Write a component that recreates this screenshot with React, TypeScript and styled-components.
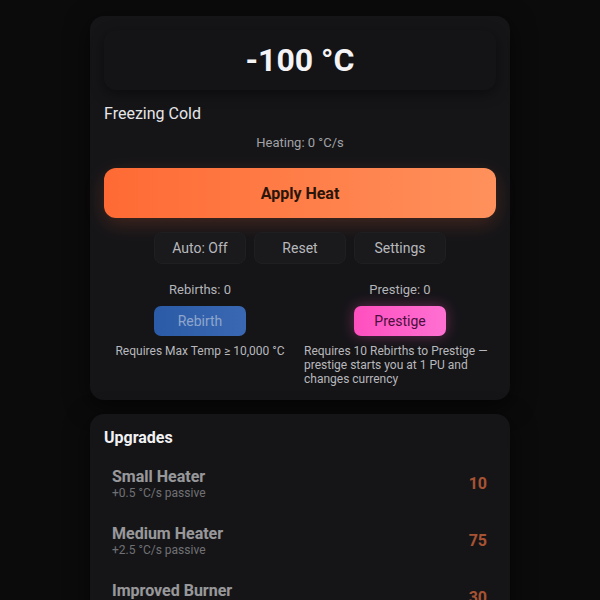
import React from 'react'
import styled, { createGlobalStyle } from 'styled-components'

const GlobalStyle = createGlobalStyle`
  html, body {
    margin: 0;
    background: #0b0b0c;
    color: #e8e8ea;
    font-family: Roboto, 'Noto Sans', Arial, sans-serif;
  }
`

const Page = styled.div`
  width: 420px;
  margin: 0 auto;
  padding: 16px 0;
  display: flex;
  flex-direction: column;
  gap: 14px;
`

const Card = styled.div`
  background: #151518;
  border-radius: 14px;
  padding: 14px;
  box-shadow: 0 6px 24px rgba(0, 0, 0, 0.6);
  display: flex;
  flex-direction: column;
`

const TempBox = styled.div`
  height: 60px;
  border-radius: 12px;
  background: #141416;
  box-shadow: 0 4px 14px rgba(0, 0, 0, 0.45);
  display: flex;
  align-items: center;
  justify-content: center;
  font-size: 32px;
  font-weight: 700;
  color: #f4f4f6;
`

const Status = styled.div`
  margin-top: 14px;
  font-size: 16px;
  color: #e6e6e8;
`

const Rate = styled.div`
  margin-top: 12px;
  text-align: center;
  font-size: 13px;
  color: #a2a2a6;
`

const HeatButton = styled.button`
  margin-top: 18px;
  height: 50px;
  border: none;
  border-radius: 12px;
  background: linear-gradient(90deg, #ff6a34, #ff915c);
  box-shadow: 0 6px 20px rgba(255, 110, 60, 0.2);
  color: #2a150b;
  font-family: inherit;
  font-size: 16px;
  font-weight: 700;
`

const Controls = styled.div`
  margin-top: 14px;
  display: flex;
  justify-content: center;
  gap: 8px;
`

const SmallButton = styled.button`
  width: 92px;
  height: 32px;
  border: 1px solid #1f1f22;
  border-radius: 8px;
  background: #1a1a1d;
  color: #b8b8bc;
  font-family: inherit;
  font-size: 14px;
`

const Meta = styled.div`
  margin-top: 18px;
  display: grid;
  grid-template-columns: 1fr 1fr;
  column-gap: 8px;
`

const MetaColumn = styled.div`
  display: flex;
  flex-direction: column;
  align-items: center;
`

const MetaLabel = styled.div`
  font-size: 13px;
  color: #b4b4b8;
`

const ActionButton = styled.button<{ $kind: 'rebirth' | 'prestige' }>`
  margin-top: 9px;
  width: 92px;
  height: 30px;
  border: none;
  border-radius: 7px;
  font-family: inherit;
  font-size: 14px;
  background: ${({ $kind }) =>
    $kind === 'rebirth'
      ? 'linear-gradient(90deg, #2b5aa6, #3a68b2)'
      : 'linear-gradient(90deg, #ff4fbf, #ff70d2)'};
  color: ${({ $kind }) => ($kind === 'rebirth' ? '#8ea6cc' : '#4a0f3c')};
  box-shadow: ${({ $kind }) =>
    $kind === 'rebirth' ? 'none' : '0 0 14px rgba(255, 80, 190, 0.35)'};
`

const Note = styled.div`
  margin-top: 8px;
  font-size: 12px;
  line-height: 14px;
  color: #b8b8bc;
`

const SectionTitle = styled.div`
  font-size: 16px;
  font-weight: 700;
  color: #f2f2f4;
`

const List = styled.div`
  margin-top: 20px;
  display: flex;
  flex-direction: column;
  gap: 24px;
`

const Item = styled.div`
  padding: 0 9px 0 8px;
  display: flex;
  align-items: center;
  justify-content: space-between;
  opacity: 0.62;
`

const ItemName = styled.div`
  font-size: 16px;
  font-weight: 700;
  color: #e8e8ea;
`

const ItemDesc = styled.div`
  font-size: 12px;
  color: #a8a8ac;
`

const Cost = styled.div`
  font-size: 16px;
  font-weight: 700;
  color: #ff7a45;
`

const upgrades = [
  { name: 'Small Heater', desc: '+0.5 °C/s passive', cost: 10 },
  { name: 'Medium Heater', desc: '+2.5 °C/s passive', cost: 75 },
  { name: 'Improved Burner', desc: '+1 °C per click', cost: 30 },
]

export default function App() {
  return (
    <>
      <GlobalStyle />
      <Page>
        <Card>
          <TempBox>-100 °C</TempBox>
          <Status>Freezing Cold</Status>
          <Rate>Heating: 0 °C/s</Rate>
          <HeatButton>Apply Heat</HeatButton>
          <Controls>
            <SmallButton>Auto: Off</SmallButton>
            <SmallButton>Reset</SmallButton>
            <SmallButton>Settings</SmallButton>
          </Controls>
          <Meta>
            <MetaColumn>
              <MetaLabel>Rebirths: 0</MetaLabel>
              <ActionButton $kind="rebirth">Rebirth</ActionButton>
              <Note>Requires Max Temp ≥ 10,000 °C</Note>
            </MetaColumn>
            <MetaColumn>
              <MetaLabel>Prestige: 0</MetaLabel>
              <ActionButton $kind="prestige">Prestige</ActionButton>
              <Note>
                Requires 10 Rebirths to Prestige — prestige starts you at 1 PU and changes currency
              </Note>
            </MetaColumn>
          </Meta>
        </Card>
        <Card>
          <SectionTitle>Upgrades</SectionTitle>
          <List>
            {upgrades.map((u) => (
              <Item key={u.name}>
                <div>
                  <ItemName>{u.name}</ItemName>
                  <ItemDesc>{u.desc}</ItemDesc>
                </div>
                <Cost>{u.cost}</Cost>
              </Item>
            ))}
          </List>
        </Card>
      </Page>
    </>
  )
}
